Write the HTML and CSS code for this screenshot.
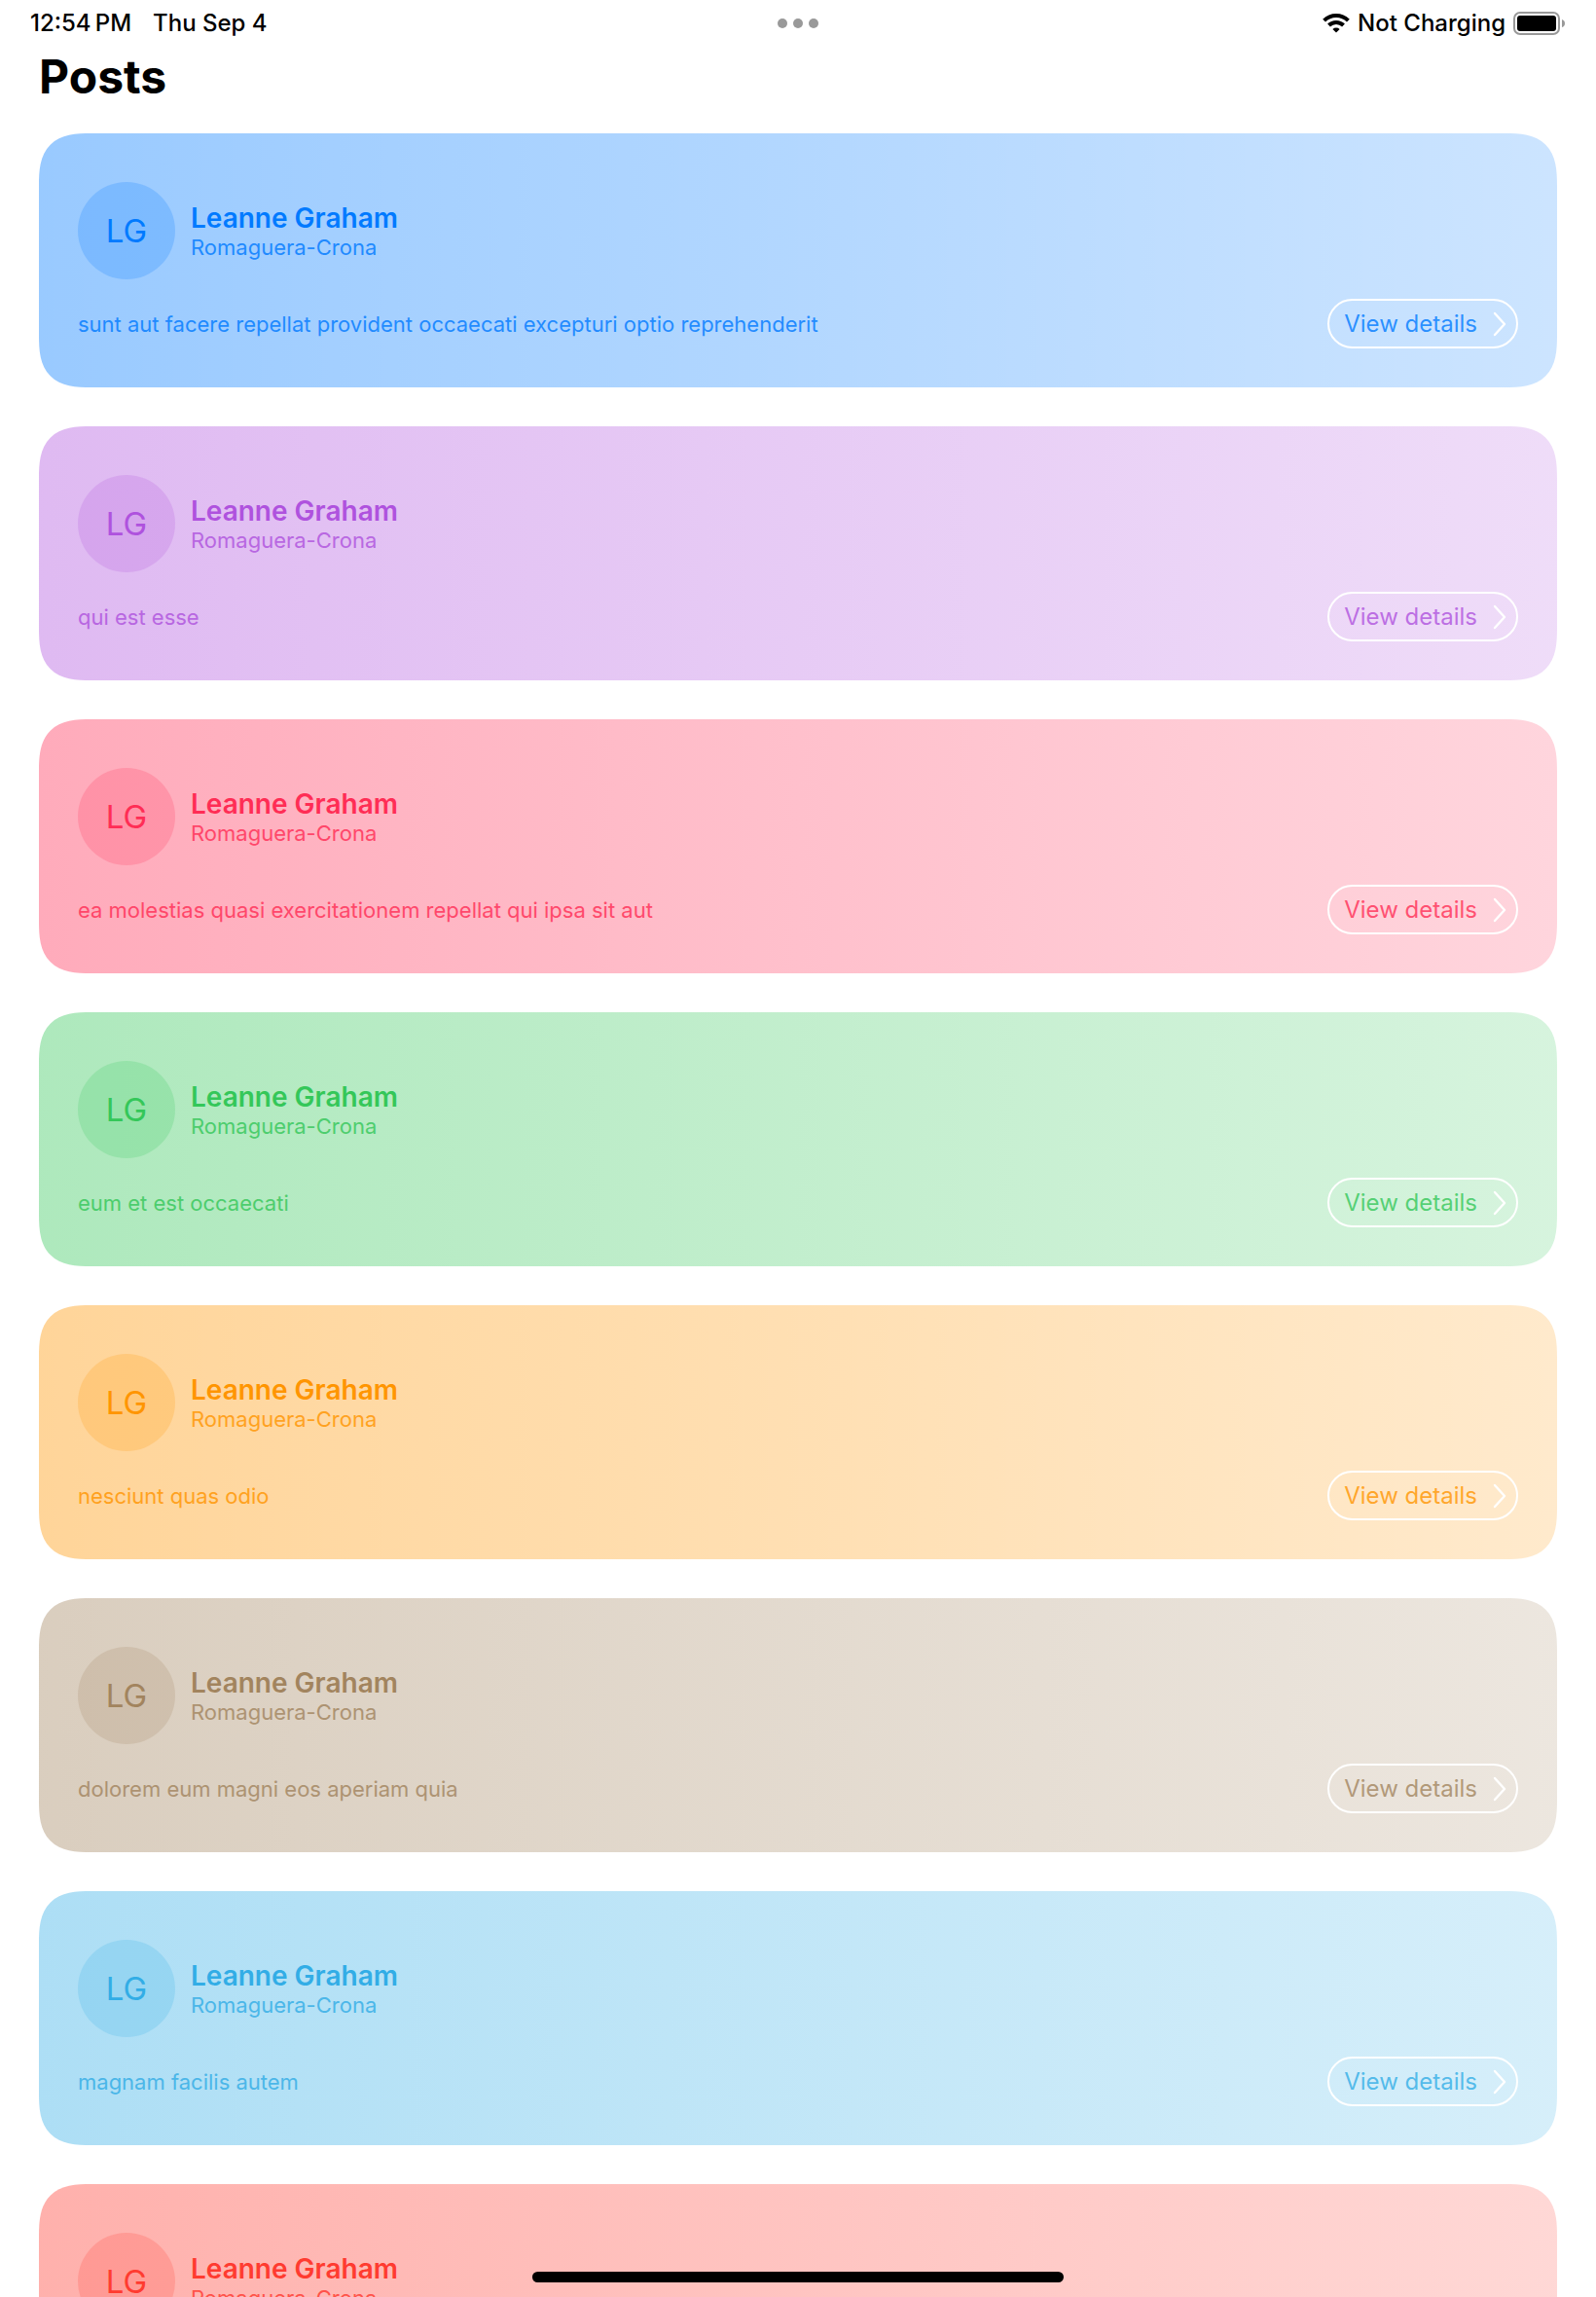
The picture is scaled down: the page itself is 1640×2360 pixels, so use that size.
FILE: index.html
```html
<!DOCTYPE html>
<html lang="en">
<head>
<meta charset="utf-8">
<meta name="viewport" content="width=device-width, initial-scale=1">
<title>Posts</title>
<link rel="stylesheet" href="styles.css">
</head>
<body>
<svg class="sprite" aria-hidden="true">
  <symbol id="chevron" viewBox="0 0 14 26"><path d="M2 2 L12 13 L2 24" fill="none" stroke="currentColor" stroke-width="2.4" stroke-linecap="round" stroke-linejoin="round"/></symbol>
</svg>
<header class="status">
  <div class="status-side">
    <span>12:54&#8201;PM</span>
    <span>Thu Sep 4</span>
  </div>
  <div class="dots"><i></i><i></i><i></i></div>
  <div class="status-side status-right">
    <svg class="wifi" viewBox="0 0 28 20" aria-label="Wi-Fi"><g fill="none" stroke="#000" stroke-width="4"><path d="M1.6 7.2 A17.5 17.5 0 0 1 26.4 7.2"/><path d="M6.5 12 A10.6 10.6 0 0 1 21.5 12"/></g><path d="M14 19.6 L10.4 16 A5.2 5.2 0 0 1 17.6 16 Z"/></svg>
    <span>Not Charging</span>
    <svg class="battery" viewBox="0 0 54 24" aria-label="Battery full"><rect x="1" y="1" width="46" height="22" rx="6" fill="none" stroke="#999" stroke-width="2"/><rect x="4" y="4" width="40" height="16" rx="3"/><path d="M50 8 Q53 9 53 12 Q53 15 50 16 Z" fill="#999"/></svg>
  </div>
</header>
<h1 class="title">Posts</h1>
<main class="posts">
  <article class="card blue">
    <div class="author"><div class="avatar">LG</div><div class="who"><h2 class="name">Leanne Graham</h2><p class="company">Romaguera-Crona</p></div></div>
    <div class="footer"><p class="text">sunt aut facere repellat provident occaecati excepturi optio reprehenderit</p><button class="details" type="button"><span>View details</span><svg><use href="#chevron"/></svg></button></div>
  </article>
  <article class="card purple">
    <div class="author"><div class="avatar">LG</div><div class="who"><h2 class="name">Leanne Graham</h2><p class="company">Romaguera-Crona</p></div></div>
    <div class="footer"><p class="text">qui est esse</p><button class="details" type="button"><span>View details</span><svg><use href="#chevron"/></svg></button></div>
  </article>
  <article class="card pink">
    <div class="author"><div class="avatar">LG</div><div class="who"><h2 class="name">Leanne Graham</h2><p class="company">Romaguera-Crona</p></div></div>
    <div class="footer"><p class="text">ea molestias quasi exercitationem repellat qui ipsa sit aut</p><button class="details" type="button"><span>View details</span><svg><use href="#chevron"/></svg></button></div>
  </article>
  <article class="card green">
    <div class="author"><div class="avatar">LG</div><div class="who"><h2 class="name">Leanne Graham</h2><p class="company">Romaguera-Crona</p></div></div>
    <div class="footer"><p class="text">eum et est occaecati</p><button class="details" type="button"><span>View details</span><svg><use href="#chevron"/></svg></button></div>
  </article>
  <article class="card orange">
    <div class="author"><div class="avatar">LG</div><div class="who"><h2 class="name">Leanne Graham</h2><p class="company">Romaguera-Crona</p></div></div>
    <div class="footer"><p class="text">nesciunt quas odio</p><button class="details" type="button"><span>View details</span><svg><use href="#chevron"/></svg></button></div>
  </article>
  <article class="card brown">
    <div class="author"><div class="avatar">LG</div><div class="who"><h2 class="name">Leanne Graham</h2><p class="company">Romaguera-Crona</p></div></div>
    <div class="footer"><p class="text">dolorem eum magni eos aperiam quia</p><button class="details" type="button"><span>View details</span><svg><use href="#chevron"/></svg></button></div>
  </article>
  <article class="card cyan">
    <div class="author"><div class="avatar">LG</div><div class="who"><h2 class="name">Leanne Graham</h2><p class="company">Romaguera-Crona</p></div></div>
    <div class="footer"><p class="text">magnam facilis autem</p><button class="details" type="button"><span>View details</span><svg><use href="#chevron"/></svg></button></div>
  </article>
  <article class="card red">
    <div class="author"><div class="avatar">LG</div><div class="who"><h2 class="name">Leanne Graham</h2><p class="company">Romaguera-Crona</p></div></div>
  </article>
</main>
<div class="home"></div>
</body>
</html>
```
FILE: styles.css
```css
* { box-sizing: border-box; margin: 0; }

body {
  display: flex;
  flex-direction: column;
  height: 100vh;
  overflow: hidden;
  background: #fff;
  color: #000;
  font-family: Inter, "Liberation Sans", sans-serif;
}

.sprite { display: none; }

.status {
  display: flex;
  align-items: center;
  height: 48px;
  padding: 0 31px;
  font-size: 24px;
  font-weight: 500;
  line-height: 28px;
}
.status-side { display: flex; flex: 1; align-items: center; gap: 22px; }
.status-right { justify-content: flex-end; gap: 8px; }
.dots { display: flex; gap: 6px; }
.dots i { width: 10px; height: 10px; border-radius: 50%; background: #999; }
.wifi { width: 28px; height: 20px; }
.battery { width: 54px; height: 24px; }

.title {
  padding: 0 40px;
  font-size: 48px;
  font-weight: 700;
  line-height: 62px;
}

.posts {
  flex: 1;
  min-height: 0;
  padding: 27px 40px 0;
  overflow-y: auto;
  scrollbar-width: none;
}

.card {
  display: flex;
  flex-direction: column;
  gap: 10px;
  min-height: 261px;
  margin-bottom: 40px;
  padding: 40px;
  border-radius: 42px;
  background: linear-gradient(to right, rgb(var(--tint) / 40%), rgb(var(--tint) / 20%));
  color: rgb(var(--tint));
}
@supports (corner-shape: superellipse(1.5)) {
  .card { border-radius: 54px; corner-shape: superellipse(1.5); }
}
.blue { --tint: 0 122 255; }
.purple { --tint: 175 82 222; }
.pink { --tint: 255 45 85; }
.green { --tint: 52 199 89; }
.orange { --tint: 255 149 0; }
.brown { --tint: 162 132 94; }
.cyan { --tint: 50 173 230; }
.red { --tint: 255 59 48; }

.author { display: flex; align-items: center; gap: 16px; padding: 10px 0; }
.avatar {
  display: grid;
  place-items: center;
  width: 100px;
  height: 100px;
  border-radius: 50%;
  background: rgb(var(--tint) / 20%);
  font-size: 33px;
}
.who { padding-top: 2px; }
.name { font-size: 28px; font-weight: 600; line-height: 32px; }
.company { font-size: 22px; line-height: 28px; opacity: .8; }

.footer { display: flex; align-items: center; justify-content: space-between; gap: 40px; }
.text { font-size: 22px; line-height: 28px; opacity: .8; }
.details {
  display: flex;
  flex: none;
  align-items: center;
  gap: 16px;
  height: 51px;
  padding: 0 10px 0 15px;
  border: 2px solid #fff;
  border-radius: 26px;
  background: none;
  color: rgb(var(--tint) / 80%);
  font: inherit;
  font-size: 24px;
  cursor: pointer;
}
.details svg { width: 14px; height: 26px; color: #fff; }

.home {
  position: fixed;
  bottom: 15px;
  left: 50%;
  width: 33.3%;
  height: 11px;
  border-radius: 6px;
  background: #000;
  transform: translateX(-50%);
}
```
